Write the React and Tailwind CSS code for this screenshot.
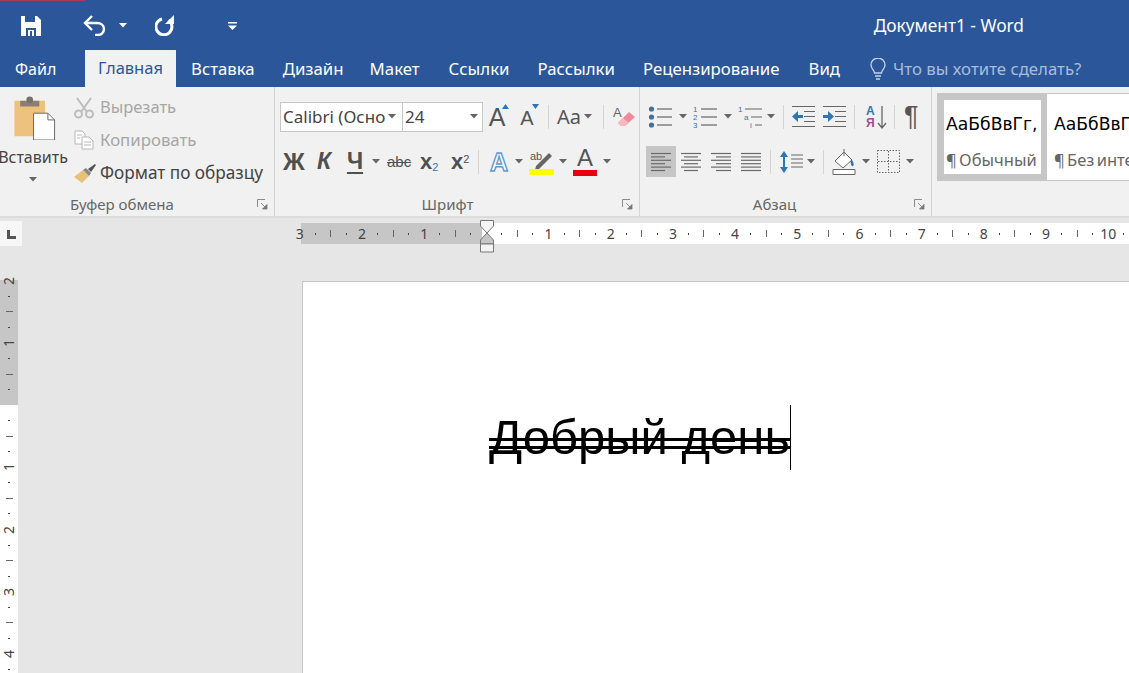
import React from "react";

const Caret = ({ className = "", color = "#666" }) => (
  <svg width="8" height="5" viewBox="0 0 8 5" className={`shrink-0 ${className}`}><path d="M0 0h8L4 4.500z" fill={color} /></svg>
);
const Sep = ({ className = "" }) => <div className={`h-[24px] w-px shrink-0 bg-[#d4d4d4] ${className}`} />;

const Launcher = () => (
  <svg width="11" height="11" viewBox="0 0 11 11"><path d="M.5 8V.5H8" fill="none" stroke="#8a8a8a" /><path d="M4 4l5 5M10 5.500V10H5.500z" fill="#777" stroke="#777" strokeWidth=".8" /></svg>
);

const Lines = ({ rows }) => (
  <svg width="22" height="22" viewBox="0 0 22 22">
    {rows.map(([a, b], i) => <path key={i} d={`M${a} ${2.5 + i * 3.4}H${b}`} stroke="#6a6a6a" strokeWidth="1.2" />)}
  </svg>
);

const Bullets = () => (
  <svg width="25" height="24" viewBox="0 0 25 24">
    {[4, 12, 20].map((y) => <g key={y}><circle cx="3.500" cy={y} r="2.600" fill="#41719c" /><path d={`M9 ${y}H24`} stroke="#666" strokeWidth="1.2" /></g>)}
  </svg>
);
const Numbered = () => (
  <svg width="25" height="24" viewBox="0 0 25 24">
    {[["1", 7], ["2", 15], ["3", 23]].map(([t, y]) => <text key={t} x="0" y={y} fontSize="8" fill="#41719c" fontFamily="Liberation Sans">{t}</text>)}
    {[4, 12, 20].map((y) => <path key={y} d={`M8 ${y}H24`} stroke="#666" strokeWidth="1.2" />)}
  </svg>
);
const Multi = () => (
  <svg width="26" height="24" viewBox="0 0 26 24">
    <text x="0" y="7" fontSize="8" fill="#41719c" fontFamily="Liberation Sans">1</text>
    <text x="6" y="15" fontSize="8" fill="#41719c" fontFamily="Liberation Sans">a</text>
    <text x="12" y="23" fontSize="8" fill="#41719c" fontFamily="Liberation Sans">i</text>
    <path d="M7 4H24M13 12H24M17 20H24" stroke="#666" strokeWidth="1.2" />
  </svg>
);
const Indent = ({ flip }) => (
  <svg width="25" height="24" viewBox="0 0 25 24">
    <path d="M1 1.500H24M13 6.500H24M13 11.500H24M13 16.500H24M1 21.500H24" stroke="#666" strokeWidth="1.2" />
    {flip
      ? <path d="M1 10h5V6l6 5.500-6 5.500v-4H1z" fill="#2e75b6" />
      : <path d="M12 10H7V6l-6 5.500L7 17v-4h5z" fill="#2e75b6" />}
  </svg>
);

const Label = ({ children, className = "" }) => (
  <div className={`relative mt-auto flex h-[24px] items-center pt-px text-[15px] text-[#666] ${className}`}>
    {children}
    <div className="absolute right-[6px] top-[7px] flex"><Launcher /></div>
  </div>
);

function Clipboard() {
  return (
    <div className="flex h-[129px] w-[275px] shrink-0 flex-col border-r border-[#d4d4d4]">
      <div className="flex h-[105px]">
        <div className="flex w-[66px] shrink-0 flex-col items-center pt-[9px]">
          <svg width="43" height="44" viewBox="0 0 44 46" className="ml-[3px]">
            <path d="M1 5h32v37H1z" fill="#edc27f" />
            <path d="M7 5h20v6H7z" fill="#8c7f72" />
            <circle cx="17" cy="4" r="3.500" fill="#7b7068" />
            <path d="M21 18h15l7 7v21H21z" fill="#fff" stroke="#666" />
            <path d="M36 18v7h7" fill="none" stroke="#666" />
          </svg>
          <div className="mt-[6px] whitespace-nowrap text-[16px] leading-[22px] text-[#444]">Вставить</div>
          <Caret className="mt-[9px]" />
        </div>
        <div className="flex flex-col pl-[8px] pt-[4px] text-[16.500px]">
          <div className="flex h-[33px] items-center gap-[6px] text-[#a6a6a6]">
            <svg width="20" height="22" viewBox="0 0 20 22" fill="none" stroke="#bdbdbd" strokeWidth="2"><circle cx="4.500" cy="17" r="3.500" /><circle cx="15.500" cy="17" r="3.500" /><path d="M3 1l10 14M17 1L7 15" /></svg>
            <span>Вырезать</span>
          </div>
          <div className="-mt-px flex h-[33px] items-center gap-[6px] text-[16.800px] text-[#a6a6a6]">
            <svg width="20" height="20" viewBox="0 0 20 20" fill="#fff" stroke="#b5b5b5"><path d="M1 1h7l3 3v10H1z" /><path d="M8 7h7l4 4v8H8z" /><path d="M3 5h5M3 8h3M10 12h7M10 15h7" /></svg>
            <span>Копировать</span>
          </div>
          <div className="flex h-[33px] items-center gap-[3px] whitespace-nowrap text-[17.200px] text-[#444]">
            <svg width="23" height="20" viewBox="0 0 23 20"><path d="M0 14L9 7l6 6-7 7z" fill="#eabf78" /><path d="M9 7l3-2 5 5-2 3z" fill="#888" /><path d="M14 6l7-5 1 1-5 7z" fill="#555" /></svg>
            <span>Формат по образцу</span>
          </div>
        </div>
      </div>
      <Label className="pl-[70px]">Буфер обмена</Label>
    </div>
  );
}

function Font() {
  return (
    <div className="flex h-[129px] w-[365px] shrink-0 flex-col border-r border-[#d4d4d4]">
      <div className="flex h-[52px] shrink-0 items-center pl-[5px] pt-[7px]">
        <div className="flex h-[30px] w-[123px] items-center justify-between overflow-hidden whitespace-nowrap border border-[#c6c6c6] bg-white pl-[2px] pr-[6px] text-[17px] text-[#444]">
          <span>Calibri (Осно</span><Caret />
        </div>
        <div className="-ml-px flex h-[30px] w-[81px] items-center justify-between border border-[#c6c6c6] bg-white pl-[2px] pr-[4px] text-[17px] text-[#444]">
          <span>24</span><Caret />
        </div>
        <div className="relative ml-[3px] w-[22px] text-center font-['Liberation_Sans',sans-serif] text-[25px] leading-[28px] text-[#555]">A
          <svg width="7" height="5" viewBox="0 0 7 5" className="absolute right-[-1px] top-[1px]"><path d="M0 5h7L3.500 0z" fill="#2e75b6" /></svg>
        </div>
        <div className="relative ml-[10px] mt-[2px] w-[18px] text-center font-['Liberation_Sans',sans-serif] text-[20px] leading-[24px] text-[#555]">A
          <svg width="7" height="5" viewBox="0 0 7 5" className="absolute right-[-3px] top-[-2px]"><path d="M0 0h7L3.500 5z" fill="#2e75b6" /></svg>
        </div>
        <Sep className="ml-[12px]" />
        <div className="ml-[8px] w-[26px] text-[20px] leading-[24px] text-[#555]">Aa</div>
        <Caret className="ml-[1px]" />
        <Sep className="ml-[11px]" />
        <svg width="24" height="24" viewBox="0 0 24 24" className="ml-[9px]"><text x="0" y="12" fontSize="13" fill="#666" fontFamily="Liberation Sans">A</text><path d="M5 18L16 7l6 5-10 9H8z" fill="#ee8a9b" /><path d="M5 18l5-5 6 5-4 3H8z" fill="#f6b9c4" /></svg>
      </div>
      <div className="flex h-[45px] shrink-0 items-center pl-[8px] font-['Liberation_Sans',sans-serif] text-[#505050]">
        <span className="w-[34px] text-[24px] font-bold leading-none">Ж</span>
        <span className="w-[26px] text-[23px] font-bold italic leading-none">К</span>
        <span className="w-[24px] text-center text-[23px] font-bold leading-none underline underline-offset-[3px]">Ч</span>
        <Caret className="ml-[5px]" />
        <span className="ml-[7px] w-[33px] text-[15px] leading-none line-through">abc</span>
        <span className="w-[31px] text-[22px] font-bold leading-none">x<sub className="text-[11px] font-normal text-[#2e75b6]">2</sub></span>
        <span className="w-[27px] text-[22px] font-bold leading-none">x<sup className="text-[11px] font-normal">2</sup></span>
        <Sep />
        <svg width="22" height="24" viewBox="0 0 22 24" className="ml-[9px]"><text x="11" y="21" textAnchor="middle" fontSize="25" fontWeight="700" fill="#fff" stroke="#5b9bd5" strokeWidth="1.400" fontFamily="Liberation Sans">A</text></svg>
        <Caret className="ml-[5px]" />
        <svg width="26" height="26" viewBox="0 0 26 26" className="ml-[6px]"><text x="1" y="11" fontSize="11" fill="#555" fontFamily="Liberation Sans">ab</text><path d="M7 17L20 4l3 3-13 13-4 1z" fill="#666" /><path d="M0 20h25v6H0z" fill="#ffff00" /></svg>
        <Caret className="ml-[4px]" />
        <div className="ml-[6px] flex w-[24px] flex-col items-center">
          <span className="text-[24px] leading-[21px] text-[#555]">A</span>
          <span className="mt-[2px] h-[6px] w-[24px] bg-[#e8000d]" />
        </div>
        <Caret className="ml-[6px]" />
      </div>
      <Label className="justify-center pr-[19px]">Шрифт</Label>
    </div>
  );
}

function Paragraph() {
  return (
    <div className="flex h-[129px] w-[292px] shrink-0 flex-col border-r border-[#d4d4d4]">
      <div className="flex h-[52px] shrink-0 items-center pl-[8px] pt-[7px]">
        <Bullets /><Caret className="ml-[6px]" />
        <div className="ml-[6px] flex"><Numbered /></div><Caret className="ml-[6px]" />
        <div className="ml-[6px] flex"><Multi /></div><Caret className="ml-[3px]" />
        <Sep className="ml-[8px]" />
        <div className="ml-[7px] flex"><Indent /></div>
        <div className="ml-[6px] flex"><Indent flip /></div>
        <Sep className="ml-[7px]" />
        <svg width="22" height="26" viewBox="0 0 22 26" className="ml-[11px]">
          <text x="0" y="11" fontSize="12" fontWeight="700" fill="#2e75b6" fontFamily="Liberation Sans">А</text>
          <text x="0" y="23" fontSize="12" fontWeight="700" fill="#a34a9a" fontFamily="Liberation Sans">Я</text>
          <path d="M16 2v21M12 19l4 5 4-5" fill="none" stroke="#666" strokeWidth="1.300" />
        </svg>
        <Sep className="ml-[6px]" />
        <span className="ml-[9px] font-['Liberation_Sans',sans-serif] text-[27px] leading-none text-[#555]">¶</span>
      </div>
      <div className="flex h-[45px] shrink-0 items-center pl-[6px]">
        <div className="flex h-[31px] w-[30px] items-center justify-center bg-[#c6c6c6]">
          <Lines rows={[[1, 21], [1, 15], [1, 21], [1, 15], [1, 21], [1, 15]]} />
        </div>
        <div className="ml-[4px] flex"><Lines rows={[[1, 21], [4, 18], [1, 21], [4, 18], [1, 21], [4, 18]]} /></div>
        <div className="ml-[8px] flex"><Lines rows={[[1, 21], [6, 21], [1, 21], [6, 21], [1, 21], [6, 21]]} /></div>
        <div className="ml-[8px] flex"><Lines rows={[[1, 21], [1, 21], [1, 21], [1, 21], [1, 21], [1, 21]]} /></div>
        <Sep className="ml-[8px]" />
        <svg width="25" height="26" viewBox="0 0 25 26" className="ml-[8px]">
          <path d="M5 2L1 8h8zM5 24l-4-6h8z" fill="#2e75b6" /><path d="M5 7v12" stroke="#2e75b6" strokeWidth="2" />
          <path d="M12 6h12M12 10h12M12 14h12M12 18h12" stroke="#666" strokeWidth="1.200" />
        </svg>
        <Caret className="ml-[3px]" />
        <Sep className="ml-[8px]" />
        <svg width="25" height="27" viewBox="0 0 25 27" className="ml-[8px]">
          <path d="M3 13l9-9 8 8-9 8z" fill="#fff" stroke="#666" /><path d="M12 1v7" stroke="#666" />
          <path d="M19 11c3 3 3 6 2 7s-3-1-2-7z" fill="#2e75b6" />
          <path d="M1 21.500h22v5H1z" fill="#fff" stroke="#666" />
        </svg>
        <Caret className="ml-[5px]" />
        <svg width="23" height="23" viewBox="0 0 23 23" className="ml-[7px]" fill="none" stroke="#666" strokeDasharray="1.500 1.500"><path d="M.5.500h22v22H.5zM11.500 1v21M1 11.500h21" /></svg>
        <Caret className="ml-[6px]" />
      </div>
      <Label className="justify-center pr-[22px]">Абзац</Label>
    </div>
  );
}

function Styles() {
  return (
    <div className="flex min-w-0 flex-1 overflow-hidden pl-[5px] pt-[6px]">
      <div className="flex h-[88px] flex-1 whitespace-nowrap border border-r-0 border-[#c6c6c6] bg-white">
        <div className="flex h-full w-[109px] shrink-0 flex-col overflow-hidden border-[6px] border-[#c6c6c6] bg-white pl-[2px]">
          <div className="mt-[12px] h-[24px] overflow-hidden font-['DejaVu_Sans',sans-serif] text-[17.200px] leading-[24px] text-black">АаБбВвГг,</div>
          <div className="mt-[13px] text-[16.500px] leading-[22px] text-[#666] [word-spacing:-2px]">¶ Обычный</div>
        </div>
        <div className="flex flex-col pl-[7px] pt-[18px]">
          <div className="h-[24px] font-['DejaVu_Sans',sans-serif] text-[17.200px] leading-[24px] text-black">АаБбВвГг</div>
          <div className="mt-[13px] text-[16.500px] leading-[22px] text-[#666] [word-spacing:-2px]">¶ Без инте</div>
        </div>
      </div>
    </div>
  );
}

const hUnits = Array.from({ length: 55 });
const hNum = { 0: "3", 4: "2", 8: "1", 16: "1", 20: "2", 24: "3", 28: "4", 32: "5", 36: "6", 40: "7", 44: "8", 48: "9", 52: "10" };

function HRuler() {
  return (
    <div className="relative ml-[279px] mt-[5px] h-[21px] min-w-0 flex-1 bg-[linear-gradient(to_right,#c6c6c6_181px,#ffffff_181px)]">
      <div className="-ml-[9px] flex h-full items-center overflow-hidden font-['Noto_Sans',sans-serif] text-[14px] text-[#444]">
        {hUnits.map((_, i) => (
          <div key={i} className="flex h-full w-[15.55px] shrink-0 items-center justify-center">
            {hNum[i] ? <span>{hNum[i]}</span> : i === 12 ? null : i % 2 === 0
              ? <span className="h-[7px] w-px bg-[#666]" />
              : <span className="h-[2px] w-px bg-[#444]" />}
          </div>
        ))}
      </div>
      <svg width="16" height="33" viewBox="0 0 16 33" className="absolute left-[178px] top-[-3px]">
        <path d="M1.500.500h13V6L8 13 1.500 6z" fill="#f4f4f4" stroke="#777" />
        <path d="M8 13l6.500 7v4h-13v-4z" fill="#c6c6c6" stroke="#777" />
        <path d="M1.500 24h13v8h-13z" fill="#f4f4f4" stroke="#777" />
      </svg>
    </div>
  );
}

const vUnits = Array.from({ length: 26 });
const vNum = { 0: "2", 4: "1", 12: "1", 16: "2", 20: "3", 24: "4" };
function VRuler() {
  return (
    <div className="-mt-[8px] h-[408px] w-[18px] shrink-0 overflow-hidden bg-[linear-gradient(to_bottom,transparent_7px,#c6c6c6_7px,#c6c6c6_132px,#ffffff_132px)] font-['Noto_Sans',sans-serif] text-[14px] text-[#444]">
      {vUnits.map((_, i) => (
        <div key={i} className="flex h-[15.55px] w-full items-center justify-center">
          {vNum[i] ? <span className="-rotate-90 leading-none">{vNum[i]}</span> : i === 8 ? null : i % 2 === 0
            ? <span className="h-px w-[7px] bg-[#666]" />
            : <span className="h-px w-[2px] bg-[#444]" />}
        </div>
      ))}
    </div>
  );
}

export default function App() {
  const tabs = [["Вставка", 15], ["Дизайн", 28], ["Макет", 26], ["Ссылки", 29], ["Рассылки", 28], ["Рецензирование", 28], ["Вид", 29]];
  return (
    <div className="flex h-screen w-full flex-col overflow-hidden bg-[#e6e6e6] font-['Noto_Sans',sans-serif]">
      <div className="flex h-[50px] shrink-0 flex-col bg-[#2b579a]">
        <div className="h-[1px] w-[85px] bg-[#a83c56]" />
        <div className="flex flex-1 items-center">
          <svg width="20" height="20" viewBox="0 0 20 20" className="ml-[21px]"><path d="M0 0h16l4 4v16H0z" fill="#fff" /><path d="M4 0h10v6H4z" fill="#2b579a" /><path d="M5 12h10v8H5z" fill="#2b579a" /><path d="M7 14h6v6H7z" fill="#fff" /><path d="M9 15h2v5H9z" fill="#2b579a" /></svg>
          <svg width="23" height="21" viewBox="0 0 23 21" className="ml-[42px]" fill="none" stroke="#fff" strokeWidth="2.400"><path d="M9 1L2 8l7 7" /><path d="M2 8h12c4 0 7 2.500 7 6s-3 6-6 6h-3" /></svg>
          <Caret color="#fff" className="ml-[13px]" />
          <svg width="20" height="21" viewBox="0 0 20 21" className="ml-[28px]"><path d="M13.500 5.200A8 8 0 1 1 7 4" fill="none" stroke="#fff" strokeWidth="3" /><path d="M19 0v9h-9z" fill="#fff" /></svg>
          <svg width="9" height="8" viewBox="0 0 9 8" className="ml-[53px]"><path d="M0 0h9v1.500H0zM0 3.500h9L4.500 8z" fill="#fff" /></svg>
          <span className="ml-auto mr-[105px] text-[17.300px] text-white">Документ1 - Word</span>
        </div>
      </div>
      <div className="flex h-[37px] shrink-0 items-center bg-[#2b579a] text-[16.800px] text-white">
        <span className="ml-[15px] w-[70px] text-[16px]">Файл</span>
        <div className="flex h-full w-[91px] items-center justify-center bg-[#f1f1f1] text-[16.500px] text-[#2b579a]">Главная</div>
        {tabs.map(([t, m]) => <span key={t} style={{ marginLeft: m }}>{t}</span>)}
        <svg width="16" height="22" viewBox="0 0 16 22" className="ml-[30px]" fill="none" stroke="#c6d4e8" strokeWidth="1.300"><path d="M4.500 15c0-3-3.500-4-3.500-8a7 7 0 0 1 14 0c0 4-3.500 5-3.500 8z" /><path d="M5 18h6M6 21h4" /></svg>
        <span className="ml-[7px] text-[#a9bcd8]">Что вы хотите сделать?</span>
      </div>
      <div className="flex h-[131px] shrink-0 border-b-2 border-[#dcdcdc] bg-[#f1f1f1] text-[#444]">
        <Clipboard />
        <Font />
        <Paragraph />
        <Styles />
      </div>
      <div className="flex h-[63px] shrink-0 items-start">
        <div className="mt-[3px] flex h-[25px] w-[22px] shrink-0 items-center justify-center bg-[#f7f7f7]">
          <span className="mt-[2px] h-[9px] w-[9px] border-b-[3px] border-l-[3px] border-[#555]" />
        </div>
        <HRuler />
      </div>
      <div className="flex flex-1">
        <VRuler />
        <div className="ml-[284px] flex-1 border-l border-t border-[#c6c6c6] bg-white pl-[186px] pt-[123px]">
          <span className="relative inline-block whitespace-nowrap border-r border-black font-['Liberation_Sans',sans-serif] text-[49px] leading-[65px] text-black">
            Добрый день
            <span className="absolute inset-x-0 top-[33px] h-[3px] bg-black" />
            <span className="absolute inset-x-0 top-[41px] h-[3px] bg-black" />
          </span>
        </div>
      </div>
    </div>
  );
}
